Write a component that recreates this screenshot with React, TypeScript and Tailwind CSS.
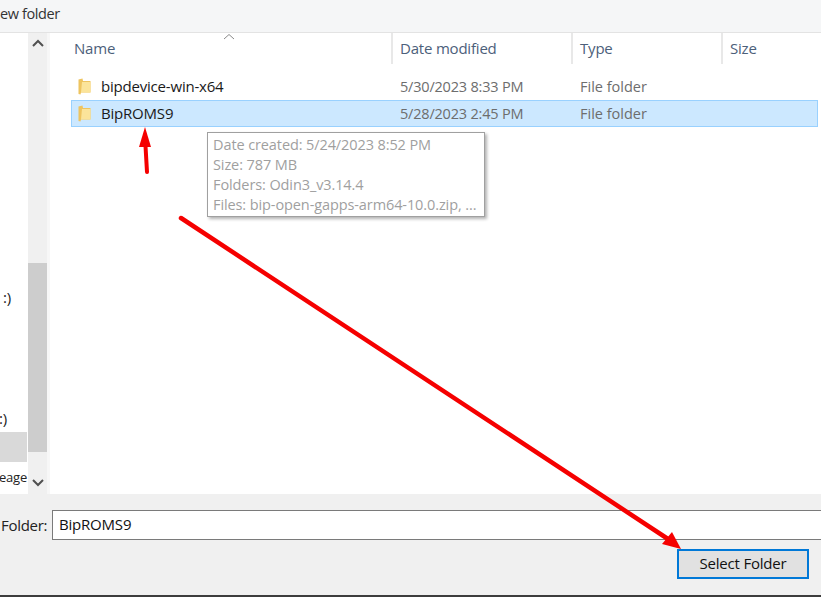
import React from "react";

const font = { fontFamily: '"Open Sans", "Noto Sans", sans-serif' };

function Folder() {
  return (
    <svg width="13" height="17" viewBox="0 0 13 17" className="shrink-0">
      <path d="M0.5 1.5 L4.5 0.5 L5 3 L12.5 3 L12.5 14.5 L3 14.5 L2.5 16.5 L0.5 16 Z" fill="#eec45f" />
      <path d="M4 4 L12.5 4 L12.5 14.5 L3 14.5 Z" fill="#fbe49a" />
    </svg>
  );
}

function Chevron({ up }: { up?: boolean }) {
  return (
    <svg width="12" height="8" viewBox="0 0 12 8">
      <path d={up ? "M1 7 L6 2 L11 7" : "M1 1 L6 6 L11 1"} fill="none" stroke="#505050" strokeWidth="2" />
    </svg>
  );
}

function Row({ name, date, selected }: { name: string; date: string; selected?: boolean }) {
  return (
    <div className={`flex h-[27px] items-center border ${selected ? "border-[#99d1ff] bg-[#cce8ff]" : "border-transparent"}`}>
      <div className="flex w-[328px] shrink-0 items-center pl-[6px]">
        <Folder />
        <span className="ml-[10px] text-[15px] tracking-[-0.2px] text-[#1a1a1a]">{name}</span>
      </div>
      <span className="w-[180px] shrink-0 text-[14.5px] tracking-[-0.2px] text-[#6d6d6d]">{date}</span>
      <span className="text-[14.5px] text-[#6d6d6d]">File folder</span>
    </div>
  );
}

function Header({ label, width, pad }: { label: string; width: string; pad: string }) {
  return (
    <div className={`flex h-[31px] shrink-0 items-center border-r-2 border-[#e8e8e8] text-[15px] tracking-[-0.2px] text-[#4c607a] ${pad} ${width}`}>
      {label}
    </div>
  );
}

export default function App() {
  return (
    <div className="relative flex h-[597px] w-[821px] flex-col overflow-hidden bg-white" style={font}>
      {/* toolbar */}
      <div className="flex h-[33px] shrink-0 items-start overflow-hidden border-b border-[#e3e3e3] bg-[#f5f6f7] pt-[3px]">
        <span className="text-[14.5px] tracking-[-0.4px] text-[#333333]">ew folder</span>
      </div>

      {/* panes */}
      <div className="flex h-[461px] shrink-0">
        <div className="relative w-[28px] shrink-0 overflow-hidden bg-white text-[15px] tracking-[-0.2px] text-[#222222]">
          <span className="absolute right-[17px] top-[253px]">:)</span>
          <span className="absolute right-[21px] top-[374px]">:)</span>
          <div className="absolute left-0 top-[399px] h-[30px] w-[27px] bg-[#d9d9d9]" />
          <span className="absolute right-[1px] top-[435px] whitespace-nowrap text-[13px] tracking-[-0.2px]">eage</span>
        </div>
        <div className="flex w-[19px] shrink-0 flex-col bg-[#f0f0f0]">
          <div className="flex h-[20px] items-center justify-center"><Chevron up /></div>
          <div className="mt-[210px] h-[189px] bg-[#cdcdcd]" />
          <div className="flex flex-1 items-end justify-center pb-[7px]"><Chevron /></div>
        </div>
        <div className="w-[3px] shrink-0 bg-[#f7f7f7]" />
        <div className="relative min-w-0 flex-1 pl-[21px]">
          <div className="relative flex">
            <Header label="Name" width="w-[322px]" pad="pl-[3px]" />
            <Header label="Date modified" width="w-[180px]" pad="pl-[7px]" />
            <Header label="Type" width="w-[150px]" pad="pl-[7px]" />
            <Header label="Size" width="w-[100px]" pad="pl-[7px]" />
            <svg width="12" height="7" viewBox="0 0 12 7" className="absolute left-[152px] top-0">
              <path d="M1 6 L6 1.5 L11 6" fill="none" stroke="#8a8a8a" strokeWidth="1" />
            </svg>
          </div>
          <div className="mt-[9px] w-[747px]">
            <Row name="bipdevice-win-x64" date="5/30/2023 8:33 PM" />
            <Row name="BipROMS9" date="5/28/2023 2:45 PM" selected />
          </div>
        </div>
      </div>

      {/* footer */}
      <div className="relative flex flex-1 flex-col border-b-2 border-[#3c3c3c] bg-[#f0f0f0]">
        <div className="flex items-center pt-[16px]">
          <span className="ml-[1px] w-[51px] shrink-0 text-[15px] tracking-[-0.3px] text-[#222222]">Folder:</span>
          <div className="flex h-[30px] flex-1 items-center border border-r-0 border-[#7a7a7a] bg-white pb-[2px] pl-[6px] text-[15px] tracking-[-0.2px] text-[#111111]">
            BipROMS9
          </div>
        </div>
        <div className="mt-[9px] flex justify-end pr-[12px]">
          <div className="flex h-[30px] w-[132px] items-center justify-center border-2 border-[#0078d7] bg-[#e1e1e1] pb-[2px] text-[15px] tracking-[-0.2px] text-[#111111]">
            Select Folder
          </div>
        </div>
      </div>

      {/* tooltip */}
      <div className="absolute left-[207px] top-[132px] h-[85px] w-[278px] border border-[#a0a0a0] bg-white py-[2px] pl-[5px] text-[14.5px] leading-[20px] tracking-[-0.1px] text-[#9f9f9f] shadow-[2px_2px_3px_rgba(0,0,0,0.3)]">
        <div>Date created: 5/24/2023 8:52 PM</div>
        <div>Size: 787 MB</div>
        <div>Folders: Odin3_v3.14.4</div>
        <div className="whitespace-nowrap">Files: bip-open-gapps-arm64-10.0.zip, ...</div>
      </div>

      {/* annotation arrows */}
      <svg width="821" height="597" viewBox="0 0 821 597" className="pointer-events-none absolute left-0 top-0">
        <path d="M147 172 L145.5 146" stroke="#f50000" strokeWidth="4" strokeLinecap="round" fill="none" />
        <path d="M145 127 L151 147 L139 147 Z" fill="#f50000" />
        <path d="M181 218 L668 539" stroke="#f50000" strokeWidth="4.5" strokeLinecap="round" fill="none" />
        <path d="M681 549 L662 544 L672 532 Z" fill="#f50000" />
      </svg>
    </div>
  );
}
